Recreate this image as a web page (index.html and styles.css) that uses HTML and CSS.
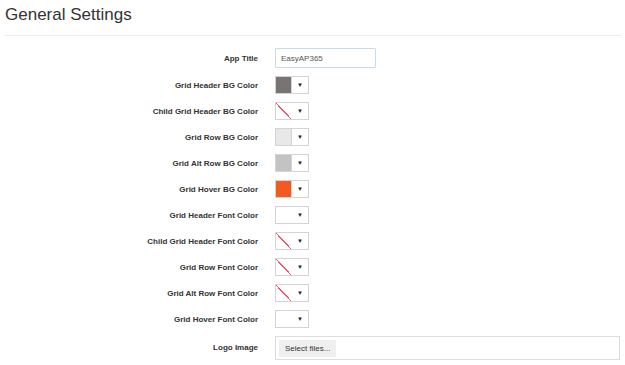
FILE: index.html
```html
<!DOCTYPE html>
<html>
<head>
<meta charset="utf-8">
<link rel="stylesheet" href="styles.css">
</head>
<body>
<div class="header">
  <h1 class="title">General Settings</h1>
</div>
<div class="form">
  <div class="row row-text">
    <label class="lbl">App Title</label>
    <div class="ctl"><input class="text-input" type="text" value="EasyAP365"></div>
  </div>
  <div class="row">
    <label class="lbl">Grid Header BG Color</label>
    <div class="ctl"><span class="picker"><span class="swatch sw-gray"></span><span class="arrow">▼</span></span></div>
  </div>
  <div class="row">
    <label class="lbl">Child Grid Header BG Color</label>
    <div class="ctl"><span class="picker"><span class="swatch sw-none"></span><span class="arrow">▼</span></span></div>
  </div>
  <div class="row">
    <label class="lbl">Grid Row BG Color</label>
    <div class="ctl"><span class="picker"><span class="swatch sw-light"></span><span class="arrow">▼</span></span></div>
  </div>
  <div class="row">
    <label class="lbl">Grid Alt Row BG Color</label>
    <div class="ctl"><span class="picker"><span class="swatch sw-mid"></span><span class="arrow">▼</span></span></div>
  </div>
  <div class="row">
    <label class="lbl">Grid Hover BG Color</label>
    <div class="ctl"><span class="picker"><span class="swatch sw-orange"></span><span class="arrow">▼</span></span></div>
  </div>
  <div class="row">
    <label class="lbl">Grid Header Font Color</label>
    <div class="ctl"><span class="picker"><span class="swatch sw-white"></span><span class="arrow">▼</span></span></div>
  </div>
  <div class="row">
    <label class="lbl">Child Grid Header Font Color</label>
    <div class="ctl"><span class="picker"><span class="swatch sw-none"></span><span class="arrow">▼</span></span></div>
  </div>
  <div class="row">
    <label class="lbl">Grid Row Font Color</label>
    <div class="ctl"><span class="picker"><span class="swatch sw-none"></span><span class="arrow">▼</span></span></div>
  </div>
  <div class="row">
    <label class="lbl">Grid Alt Row Font Color</label>
    <div class="ctl"><span class="picker"><span class="swatch sw-none"></span><span class="arrow">▼</span></span></div>
  </div>
  <div class="row">
    <label class="lbl">Grid Hover Font Color</label>
    <div class="ctl"><span class="picker"><span class="swatch sw-white"></span><span class="arrow">▼</span></span></div>
  </div>
  <div class="row row-upload">
    <label class="lbl">Logo Image</label>
    <div class="ctl"><div class="upload"><span class="upload-btn">Select files...</span></div></div>
  </div>
</div>
</body>
</html>
```

FILE: styles.css
```css
* { box-sizing: border-box; }
html, body { margin: 0; padding: 0; background: #fff; }
body {
  font-family: "Liberation Sans", Arial, sans-serif;
  color: #333;
  width: 625px;
  height: 365px;
  overflow: hidden;
}
.header {
  margin: 0 4px;
  padding: 5px 0 10px 1px;
  border-bottom: 1px solid #ececec;
}
.title {
  margin: 0;
  font-size: 17px;
  line-height: 20px;
  font-weight: normal;
  color: #333;
}
.form {
  margin-top: 8px;
  display: flex;
  flex-direction: column;
}
.row {
  display: grid;
  grid-template-columns: 258px 1fr;
  column-gap: 17px;
  align-items: center;
  height: 26px;
}
.row-text { height: 28px; }
.row-upload { height: 30px; align-items: start; padding-top: 4px; }
.row-upload .lbl { padding-top: 7px; }
.lbl {
  text-align: right;
  font-size: 8px;
  font-weight: bold;
  color: #333;
}
.ctl { display: flex; align-items: center; }
.text-input {
  width: 101px;
  height: 20px;
  border: 1px solid #c8dbe9;
  border-radius: 1px;
  padding: 0 0 0 5px;
  font-family: "Liberation Sans", Arial, sans-serif;
  font-size: 8px;
  color: #555;
  outline: none;
  background: #fff;
}
.picker {
  display: flex;
  width: 34px;
  height: 18px;
  border: 1px solid #d4d4d4;
  background: #fff;
}
.swatch {
  width: 16px;
  height: 16px;
  border-right: 1px solid #d4d4d4;
}
.sw-gray { background: #7a7373; }
.sw-light { background: #e8e8e8; }
.sw-mid { background: #c3c3c3; }
.sw-orange { background: #f25a22; }
.sw-white { background: #fff; border-right-color: #fff; }
.sw-none {
  background: linear-gradient(45deg, transparent 46%, #f0506e 46%, #f0506e 54%, transparent 54%);
  background: linear-gradient(to bottom left, transparent calc(50% - 0.6px), #f25574 calc(50% - 0.6px), #f25574 calc(50% + 0.6px), transparent calc(50% + 0.6px));
  border-right-color: #fff;
}
.arrow {
  flex: 1;
  display: flex;
  align-items: center;
  justify-content: center;
  font-size: 6px;
  color: #222;
  line-height: 1;
}
.upload {
  width: 345px;
  height: 24px;
  border: 1px solid #dddddd;
  display: flex;
  align-items: center;
  padding-left: 3px;
}
.upload-btn {
  display: flex;
  align-items: center;
  padding: 0 6px;
  height: 17px;
  background: #efefef;
  font-size: 8px;
  color: #333;
}
```
